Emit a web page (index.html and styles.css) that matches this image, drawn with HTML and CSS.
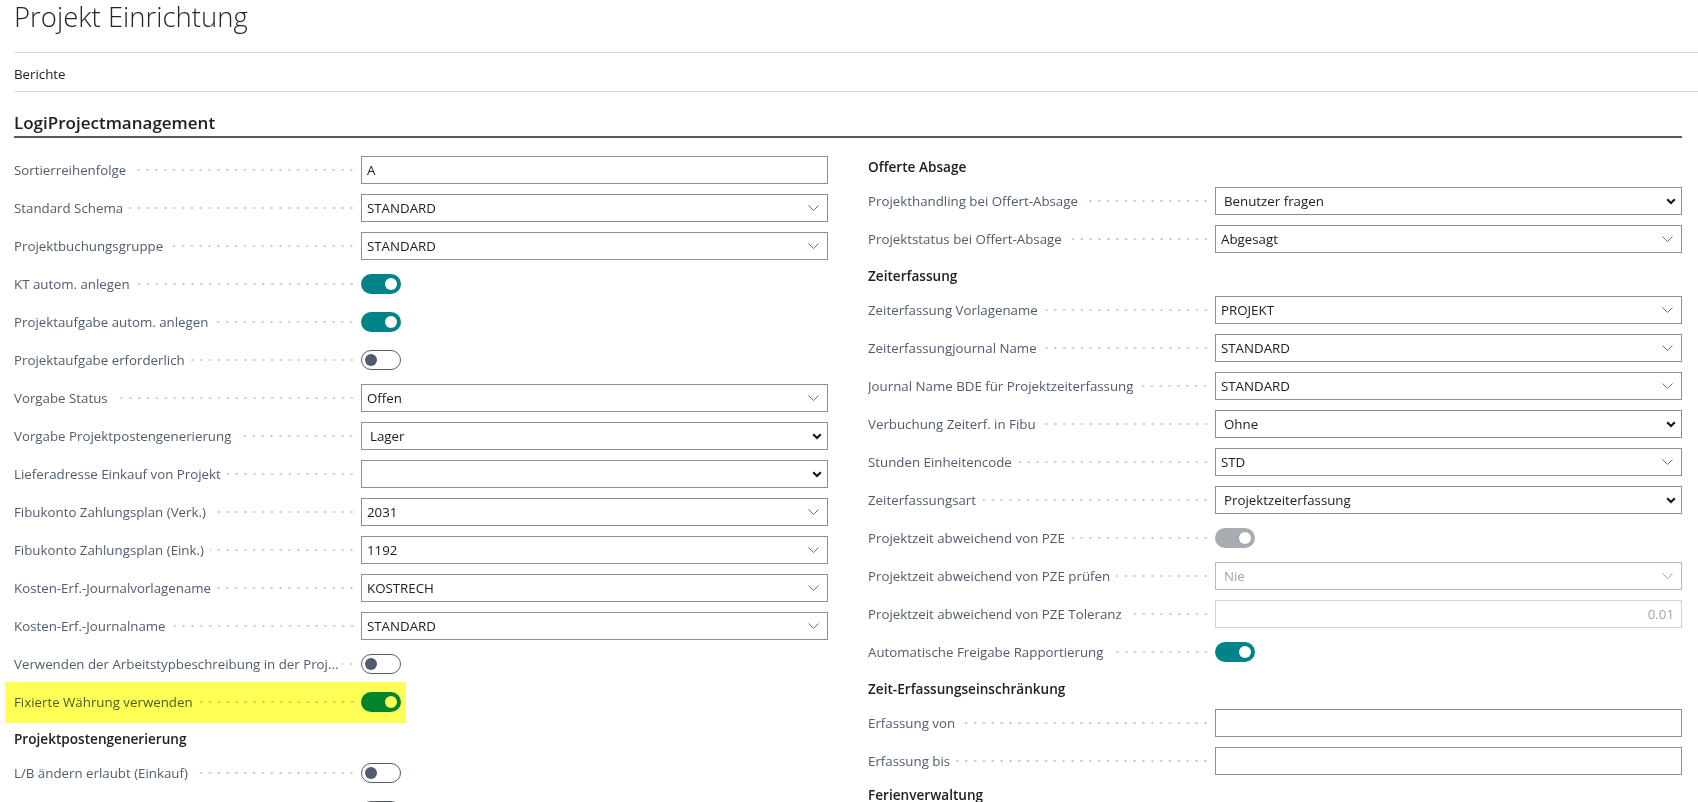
FILE: index.html
```html
<!DOCTYPE html>
<html lang="de">
<head>
<meta charset="utf-8">
<title>Projekt Einrichtung</title>
<link rel="stylesheet" href="styles.css">
</head>
<body>
<div class="page">
  <header class="title-bar"><h1 class="title">Projekt Einrichtung</h1></header>
  <nav class="action-bar"><span class="action">Berichte</span></nav>
  <section class="fasttab">
    <h2 class="fasttab-title">LogiProjectmanagement</h2>
    <div class="columns">
      <div class="col col-left">
        <div class="row"><div class="lbl"><span class="txt">Sortierreihenfolge</span><span class="dots"></span></div><div class="ctl"><div class="box"><span class="val">A</span></div></div></div>
        <div class="row"><div class="lbl"><span class="txt">Standard Schema</span><span class="dots"></span></div><div class="ctl"><div class="box"><span class="val">STANDARD</span><svg class="chev" width="11" height="6" viewBox="0 0 11 6"><path d="M0.5 0.5L5.5 5.5L10.5 0.5"/></svg></div></div></div>
        <div class="row"><div class="lbl"><span class="txt">Projektbuchungsgruppe</span><span class="dots"></span></div><div class="ctl"><div class="box"><span class="val">STANDARD</span><svg class="chev" width="11" height="6" viewBox="0 0 11 6"><path d="M0.5 0.5L5.5 5.5L10.5 0.5"/></svg></div></div></div>
        <div class="row"><div class="lbl"><span class="txt">KT autom. anlegen</span><span class="dots"></span></div><div class="ctl"><span class="toggle on"><span class="knob"></span></span></div></div>
        <div class="row"><div class="lbl"><span class="txt">Projektaufgabe autom. anlegen</span><span class="dots"></span></div><div class="ctl"><span class="toggle on"><span class="knob"></span></span></div></div>
        <div class="row"><div class="lbl"><span class="txt">Projektaufgabe erforderlich</span><span class="dots"></span></div><div class="ctl"><span class="toggle off"><span class="knob"></span></span></div></div>
        <div class="row"><div class="lbl"><span class="txt">Vorgabe Status</span><span class="dots"></span></div><div class="ctl"><div class="box"><span class="val">Offen</span><svg class="chev" width="11" height="6" viewBox="0 0 11 6"><path d="M0.5 0.5L5.5 5.5L10.5 0.5"/></svg></div></div></div>
        <div class="row"><div class="lbl"><span class="txt">Vorgabe Projektpostengenerierung</span><span class="dots"></span></div><div class="ctl"><div class="box select"><span class="val">Lager</span><svg class="chev-b" width="10" height="7" viewBox="0 0 10 7"><path d="M1.2 1.2L5 5L8.8 1.2"/></svg></div></div></div>
        <div class="row"><div class="lbl"><span class="txt">Lieferadresse Einkauf von Projekt</span><span class="dots"></span></div><div class="ctl"><div class="box select"><span class="val"></span><svg class="chev-b" width="10" height="7" viewBox="0 0 10 7"><path d="M1.2 1.2L5 5L8.8 1.2"/></svg></div></div></div>
        <div class="row"><div class="lbl"><span class="txt">Fibukonto Zahlungsplan (Verk.)</span><span class="dots"></span></div><div class="ctl"><div class="box"><span class="val">2031</span><svg class="chev" width="11" height="6" viewBox="0 0 11 6"><path d="M0.5 0.5L5.5 5.5L10.5 0.5"/></svg></div></div></div>
        <div class="row"><div class="lbl"><span class="txt">Fibukonto Zahlungsplan (Eink.)</span><span class="dots"></span></div><div class="ctl"><div class="box"><span class="val">1192</span><svg class="chev" width="11" height="6" viewBox="0 0 11 6"><path d="M0.5 0.5L5.5 5.5L10.5 0.5"/></svg></div></div></div>
        <div class="row"><div class="lbl"><span class="txt">Kosten-Erf.-Journalvorlagename</span><span class="dots"></span></div><div class="ctl"><div class="box"><span class="val">KOSTRECH</span><svg class="chev" width="11" height="6" viewBox="0 0 11 6"><path d="M0.5 0.5L5.5 5.5L10.5 0.5"/></svg></div></div></div>
        <div class="row"><div class="lbl"><span class="txt">Kosten-Erf.-Journalname</span><span class="dots"></span></div><div class="ctl"><div class="box"><span class="val">STANDARD</span><svg class="chev" width="11" height="6" viewBox="0 0 11 6"><path d="M0.5 0.5L5.5 5.5L10.5 0.5"/></svg></div></div></div>
        <div class="row"><div class="lbl"><span class="txt">Verwenden der Arbeitstypbeschreibung in der Proj...</span><span class="dots short"></span></div><div class="ctl"><span class="toggle off"><span class="knob"></span></span></div></div>
        <div class="row hl"><div class="lbl"><span class="txt">Fixierte Währung verwenden</span><span class="dots"></span></div><div class="ctl"><span class="toggle on"><span class="knob"></span></span></div></div>
        <div class="group">Projektpostengenerierung</div>
        <div class="row"><div class="lbl"><span class="txt">L/B ändern erlaubt (Einkauf)</span><span class="dots"></span></div><div class="ctl"><span class="toggle off"><span class="knob"></span></span></div></div>
        <div class="row"><div class="lbl"></div><div class="ctl"><span class="toggle off"><span class="knob"></span></span></div></div>
      </div>
      <div class="col col-right">
        <div class="group">Offerte Absage</div>
        <div class="row"><div class="lbl"><span class="txt">Projekthandling bei Offert-Absage</span><span class="dots"></span></div><div class="ctl"><div class="box select"><span class="val">Benutzer fragen</span><svg class="chev-b" width="10" height="7" viewBox="0 0 10 7"><path d="M1.2 1.2L5 5L8.8 1.2"/></svg></div></div></div>
        <div class="row"><div class="lbl"><span class="txt">Projektstatus bei Offert-Absage</span><span class="dots"></span></div><div class="ctl"><div class="box"><span class="val">Abgesagt</span><svg class="chev" width="11" height="6" viewBox="0 0 11 6"><path d="M0.5 0.5L5.5 5.5L10.5 0.5"/></svg></div></div></div>
        <div class="group">Zeiterfassung</div>
        <div class="row"><div class="lbl"><span class="txt">Zeiterfassung Vorlagename</span><span class="dots"></span></div><div class="ctl"><div class="box"><span class="val">PROJEKT</span><svg class="chev" width="11" height="6" viewBox="0 0 11 6"><path d="M0.5 0.5L5.5 5.5L10.5 0.5"/></svg></div></div></div>
        <div class="row"><div class="lbl"><span class="txt">Zeiterfassungjournal Name</span><span class="dots"></span></div><div class="ctl"><div class="box"><span class="val">STANDARD</span><svg class="chev" width="11" height="6" viewBox="0 0 11 6"><path d="M0.5 0.5L5.5 5.5L10.5 0.5"/></svg></div></div></div>
        <div class="row"><div class="lbl"><span class="txt">Journal Name BDE für Projektzeiterfassung</span><span class="dots"></span></div><div class="ctl"><div class="box"><span class="val">STANDARD</span><svg class="chev" width="11" height="6" viewBox="0 0 11 6"><path d="M0.5 0.5L5.5 5.5L10.5 0.5"/></svg></div></div></div>
        <div class="row"><div class="lbl"><span class="txt">Verbuchung Zeiterf. in Fibu</span><span class="dots"></span></div><div class="ctl"><div class="box select"><span class="val">Ohne</span><svg class="chev-b" width="10" height="7" viewBox="0 0 10 7"><path d="M1.2 1.2L5 5L8.8 1.2"/></svg></div></div></div>
        <div class="row"><div class="lbl"><span class="txt">Stunden Einheitencode</span><span class="dots"></span></div><div class="ctl"><div class="box"><span class="val">STD</span><svg class="chev" width="11" height="6" viewBox="0 0 11 6"><path d="M0.5 0.5L5.5 5.5L10.5 0.5"/></svg></div></div></div>
        <div class="row"><div class="lbl"><span class="txt">Zeiterfassungsart</span><span class="dots"></span></div><div class="ctl"><div class="box select"><span class="val">Projektzeiterfassung</span><svg class="chev-b" width="10" height="7" viewBox="0 0 10 7"><path d="M1.2 1.2L5 5L8.8 1.2"/></svg></div></div></div>
        <div class="row"><div class="lbl"><span class="txt">Projektzeit abweichend von PZE</span><span class="dots"></span></div><div class="ctl"><span class="toggle dis"><span class="knob"></span></span></div></div>
        <div class="row"><div class="lbl"><span class="txt">Projektzeit abweichend von PZE prüfen</span><span class="dots"></span></div><div class="ctl"><div class="box select disabled"><span class="val">Nie</span><svg class="chev" width="11" height="6" viewBox="0 0 11 6"><path d="M0.5 0.5L5.5 5.5L10.5 0.5"/></svg></div></div></div>
        <div class="row"><div class="lbl"><span class="txt">Projektzeit abweichend von PZE Toleranz</span><span class="dots"></span></div><div class="ctl"><div class="box disabled num"><span class="val">0.01</span></div></div></div>
        <div class="row"><div class="lbl"><span class="txt">Automatische Freigabe Rapportierung</span><span class="dots"></span></div><div class="ctl"><span class="toggle on"><span class="knob"></span></span></div></div>
        <div class="group">Zeit-Erfassungseinschränkung</div>
        <div class="row"><div class="lbl"><span class="txt">Erfassung von</span><span class="dots"></span></div><div class="ctl"><div class="box"><span class="val"></span></div></div></div>
        <div class="row"><div class="lbl"><span class="txt">Erfassung bis</span><span class="dots"></span></div><div class="ctl"><div class="box"><span class="val"></span></div></div></div>
        <div class="group last">Ferienverwaltung</div>
      </div>
    </div>
  </section>
</div>
</body>
</html>
```

FILE: styles.css
```css
* { box-sizing: border-box; }
html, body { margin: 0; padding: 0; background: #fff; }
body {
  font-family: "Open Sans", "Noto Sans", "DejaVu Sans", sans-serif;
  font-size: 13.3px;
  color: #212121;
  width: 1698px;
  height: 802px;
  overflow: hidden;
}
.page { padding-left: 14px; }

.title-bar { height: 53px; border-bottom: 1px solid #d8d8d8; }
.title {
  margin: 0;
  font-weight: 300;
  font-size: 27.5px;
  line-height: 34px;
  color: #262626;
}
.action-bar {
  height: 39px;
  border-bottom: 1px solid #d8d8d8;
  padding-top: 4px;
  line-height: 34px;
  font-size: 13.3px;
  color: #212121;
}

.fasttab { margin: 16px 16px 0 0; }
.fasttab-title {
  margin: 0;
  height: 30px;
  line-height: 30px;
  font-size: 17px;
  font-weight: 600;
  color: #212121;
  border-bottom: 2px solid #4f5866;
}
.columns {
  display: grid;
  grid-template-columns: 1fr 1fr;
  column-gap: 40px;
  margin-top: 11px;
}
.col-left { padding-top: 2px; }

.group {
  height: 33px;
  padding-top: 4px;
  line-height: 28px;
  font-size: 13.6px;
  font-weight: 600;
  color: #212121;
}
.group.last { padding-top: 1px; }

.row { display: flex; align-items: center; height: 38px; }
.lbl {
  flex: none;
  width: 347px;
  display: flex;
  align-items: center;
  color: #505c6d;
  min-width: 0;
}
.txt {
  flex: 0 1 auto;
  min-width: 0;
  white-space: nowrap;
  overflow: hidden;
  text-overflow: ellipsis;
}
.dots {
  flex: 1 0 16px;
  height: 4px;
  margin: 0 5px 0 6px;
  background-image: radial-gradient(circle, #bdbdbd 0.85px, rgba(255,255,255,0) 1.25px);
  background-size: 8.87px 4px;
  background-position: right center;
  background-repeat: repeat-x;
}
.dots.short { flex-basis: 2px; margin-left: 4px; }
.ctl { flex: 1; min-width: 0; display: flex; align-items: center; }

.box {
  flex: 1;
  height: 28px;
  border: 1px solid #8b9098;
  display: flex;
  align-items: center;
  padding: 0 8px 0 5px;
  white-space: nowrap;
  color: #212121;
}
.box .val { flex: 1; }
.box.select { padding: 0 5px 0 8px; }
.chev path { fill: none; stroke: #707070; stroke-width: 1; }
.chev-b path { fill: none; stroke: #111; stroke-width: 2; }
.box.disabled { border-color: #c0c3c7; color: #a3a3a3; }
.box.select.disabled { padding: 0 8px 0 8px; border-color: #b7babe; }
.box.disabled .chev path { stroke: #a0a0a0; }
.box.num { border-color: #d0d2d5; padding: 0 7px; }
.box.num .val { text-align: right; }

.toggle {
  display: flex;
  align-items: center;
  width: 40px;
  height: 20px;
  border-radius: 10px;
  padding: 0 4px;
}
.toggle.on { background: #008489; justify-content: flex-end; }
.toggle.dis { background: #a7acb2; justify-content: flex-end; }
.toggle.off { border: 1px solid #505c6d; padding: 0 3px; justify-content: flex-start; background: #fff; }
.knob { width: 12px; height: 12px; border-radius: 50%; }
.on .knob, .dis .knob { background: #fff; }
.off .knob { background: #505c6d; }

.row.hl { position: relative; }
.row.hl::after {
  content: "";
  position: absolute;
  left: -9px;
  top: -1px;
  bottom: -2px;
  width: 401px;
  background: #ffff55;
  mix-blend-mode: multiply;
  pointer-events: none;
}
```
